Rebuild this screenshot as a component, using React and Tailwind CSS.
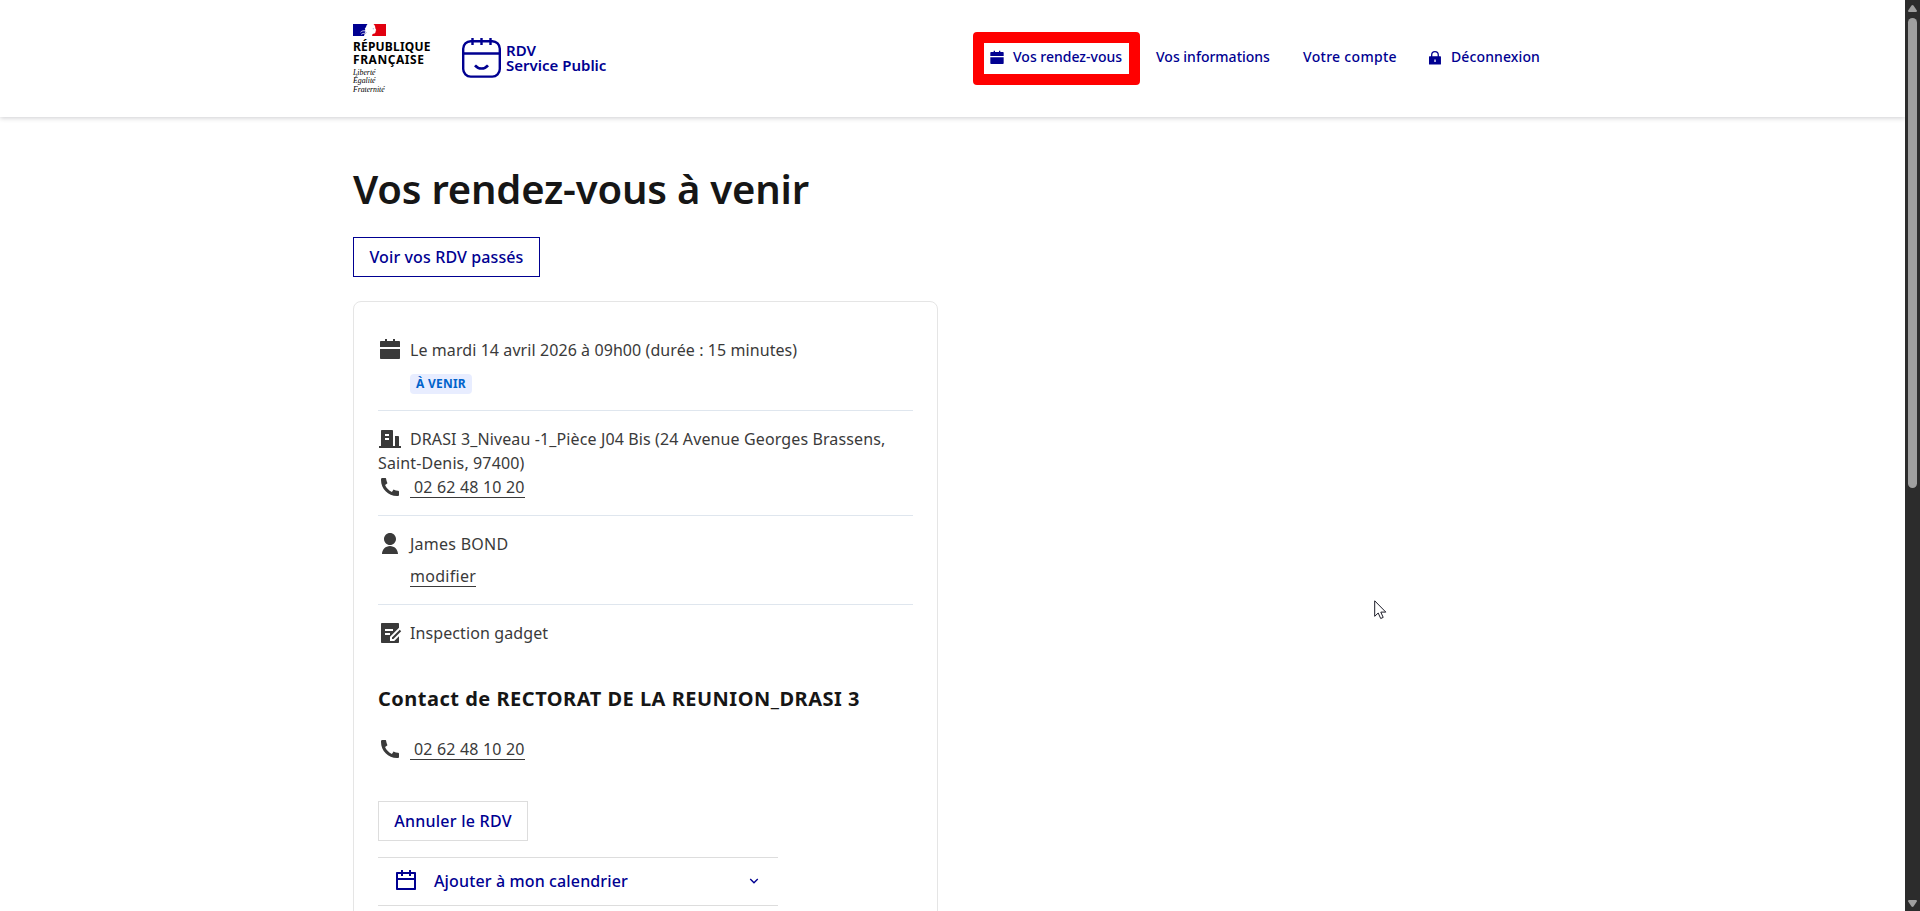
import React from 'react';
import {
  RiArrowDownSLine,
  RiBuildingFill,
  RiCalendarFill,
  RiCalendarLine,
  RiDraftFill,
  RiPhoneFill,
  RiUserFill,
} from 'react-icons/ri';

function MarianneFlag() {
  return (
    <svg width="33" height="12" viewBox="0 0 33 12">
      <rect width="33" height="12" fill="#fff" />
      <path d="M0 0h14.5c-.8.9-1.3 1.9-1.5 3l-1.2 1.8.6 1.2-.8 1 .8.6L11 12H0z" fill="#000091" />
      <path d="M20.5 0H33v12H19.2c-.2-1.3.2-2.1 1.2-2.3 1.5-.1 2.1-.5 2-1.4l.3-.9-.1-.7.7-.5-1-1.9c.1-1.8-.4-3.2-1.8-4.3z" fill="#e1000f" />
      <path d="M7.5 8.2c1.400-1.300 2.800-1.700 4.700-1.300M8.200 10.400c1.200-.9 2.600-1.300 4.300-1" fill="none" stroke="#fff" strokeWidth=".8" />
      <path d="M13.600 8.500c-.8.200-1.500.8-2 1.600M19.800 4.700l1.100.1" fill="none" stroke="#7a7ab8" strokeWidth=".7" />
    </svg>
  );
}

function RdvLogo() {
  return (
    <svg width="39" height="40" viewBox="0 0 39 40" fill="none" stroke="#000091" strokeWidth="2.4">
      <rect x="1.2" y="3.2" width="36.6" height="35.4" rx="7.5" />
      <path d="M1.2 15.5h36.6M10.500 0v7M19.500 0v7M28.500 0v7" />
      <path d="M13 27.300c3.500 4.200 9.500 4.200 13 0" strokeWidth="2.600" />
    </svg>
  );
}

function LockIcon() {
  return (
    <svg className="mt-0.5 mr-2 size-4" viewBox="0 0 16 16" fill="none">
      <path d="M4.700 7V5a3.300 3.300 0 0 1 6.600 0v2" stroke="currentColor" strokeWidth="1.300" />
      <path d="M2.600 6.300h10.800q.6 0 .6.6v7.100q0 .6-.6.6H2.600q-.6 0-.6-.6V6.900q0-.6.6-.6zM7.400 9.400v2.500h1.300V9.400z" fill="currentColor" fillRule="evenodd" />
    </svg>
  );
}

function Header() {
  return (
    <header className="h-[117px] bg-white shadow-[0_1px_5px_rgba(0,0,18,0.2)]">
      <div className="mx-auto flex w-[1199px] items-start pt-6">
        <div className="w-[109px]">
          <MarianneFlag />
          <div className="mt-1 text-xs leading-[13px] font-bold text-black">
            <div className="tracking-[0.18px]">RÉPUBLIQUE</div>
            <div className="tracking-[0.55px]">FRANÇAISE</div>
          </div>
          <div className="mt-[3px] font-['Liberation_Serif',serif] text-[7.8px] leading-[8.4px] text-black italic">
            <div>Liberté</div>
            <div>Égalité</div>
            <div className="tracking-[-0.05px]">Fraternité</div>
          </div>
        </div>
        <div className="flex items-start pt-[14px]">
          <RdvLogo />
          <div className="pt-[5px] pl-[5px] text-[15px] leading-[15px] font-semibold text-[#000091]">
            <div>RDV</div>
            <div>Service Public</div>
          </div>
        </div>
        <nav className="mt-2 mr-[-4px] ml-auto flex text-sm leading-6 font-medium text-[#000091]">
          <a className="relative flex h-[53px] w-[167px] items-center px-4 pb-[3px]">
            <RiCalendarFill className="mt-0.5 mr-2 size-4" />
            <span className="whitespace-nowrap">Vos rendez-vous</span>
            <span className="absolute inset-0 rounded-[4px] border-[11px] border-[#ff0000]" />
          </a>
          <a className="flex h-[53px] w-[147px] items-center px-4 pb-[3px]">Vos informations</a>
          <a className="flex h-[53px] w-[124px] items-center px-4 pb-[3px] tracking-[0.3px] whitespace-nowrap">Votre compte</a>
          <a className="flex h-[53px] w-[145px] items-center px-4 pb-[3px] tracking-[0.12px]">
            <LockIcon />
            Déconnexion
          </a>
        </nav>
      </div>
    </header>
  );
}

function PhoneLine() {
  return (
    <div className="flex h-6">
      <RiPhoneFill className="mr-2 size-6" />
      <a className="h-[23px] border-b border-[#3a3a3a] pl-[4px] tracking-[0.18px]">02 62 48 10 20</a>
    </div>
  );
}

function RdvCard() {
  return (
    <div className="mt-6 w-[585px] rounded-lg border border-[#e5e5e5] px-6 pt-6 text-[#3a3a3a]">
      <div className="border-b border-[#dfe6ee] pt-3 pb-4">
        <div className="flex tracking-[0.08px]">
          <RiCalendarFill className="mr-2 size-6" />
          Le mardi 14 avril 2026 à 09h00 (durée : 15 minutes)
        </div>
        <div className="mt-3 ml-8 flex h-5 w-[62px] items-center justify-center rounded bg-[#e8edff] text-xs leading-5 font-bold tracking-[0.24px] text-[#0063cb]">
          À VENIR
        </div>
      </div>
      <div className="border-b border-[#dfe6ee] py-4">
        <div className="tracking-[0.12px]">
          <RiBuildingFill className="mr-2 inline size-6 align-top" />
          DRASI 3_Niveau -1_Pièce J04 Bis (24 Avenue Georges Brassens, Saint-Denis, 97400)
        </div>
        <PhoneLine />
      </div>
      <div className="border-b border-[#dfe6ee] py-4">
        <div className="flex tracking-[0.25px]">
          <RiUserFill className="mr-2 size-6" />
          James BOND
        </div>
        <div className="mt-2 ml-8 flex h-6">
          <a className="h-[23px] border-b border-[#3a3a3a] tracking-[0.28px]">modifier</a>
        </div>
      </div>
      <div className="flex pt-4 tracking-[0.1px]">
        <RiDraftFill className="mr-2 size-6" />
        Inspection gadget
      </div>
      <h2 className="mt-10 mb-6 text-xl leading-7 font-bold tracking-[0.5px] whitespace-nowrap text-[#161616]">
        Contact de RECTORAT DE LA REUNION_DRASI 3
      </h2>
      <PhoneLine />
      <button className="mt-10 flex h-10 w-[150px] items-center justify-center border border-[#dddddd] font-medium tracking-[0.25px] text-[#000091]">
        Annuler le RDV
      </button>
      <button className="mt-4 flex h-[49px] w-[400px] items-center border-y border-[#dddddd] px-4 pb-0.5 font-medium tracking-[0.13px] text-[#000091]">
        <RiCalendarLine className="mr-4 size-6" />
        Ajouter à mon calendrier
        <RiArrowDownSLine className="ml-auto size-4" />
      </button>
      <div className="h-40" />
    </div>
  );
}

function Scrollbar() {
  return (
    <div className="flex w-[15px] flex-col items-center justify-between bg-[#2c2c2c] pt-[5px] pb-1">
      <div className="flex flex-col items-center gap-1.5">
        <svg width="9" height="7" viewBox="0 0 9 7">
          <path d="M4.500 0 5.500.6 9 5.800 8.500 7H.5L0 5.800 3.500.6z" fill="#9f9f9f" />
        </svg>
        <div className="h-[470px] w-[9px] rounded-full bg-[#9f9f9f]" />
      </div>
      <svg width="9" height="7" viewBox="0 0 9 7">
        <path d="M4.500 7 5.500 6.400 9 1.200 8.500 0H.5L0 1.200 3.500 6.400z" fill="#9f9f9f" />
      </svg>
    </div>
  );
}

function Cursor() {
  return (
    <svg className="absolute top-[600px] left-[1374px]" width="13" height="20" viewBox="0 0 13 20">
      <path
        d="M.7.8v15.500l3.500-3.300 2.500 5.500 2.500-1.100-2.400-5.300h5z"
        fill="#fff"
        stroke="#1c1c28"
        strokeWidth="1"
      />
    </svg>
  );
}

export default function App() {
  return (
    <div className="relative flex h-[911px] overflow-hidden bg-white font-['Noto_Sans',sans-serif] text-base leading-6">
      <div className="flex-1 overflow-hidden">
        <Header />
        <main className="mx-auto w-[1199px] pt-[47px]">
          <h1 className="text-[40px] leading-[50px] font-semibold tracking-[-0.2px] text-[#161616]">
            Vos rendez-vous à venir
          </h1>
          <button className="mt-[23px] flex h-10 w-[187px] items-center justify-center border border-[#000091] font-medium tracking-[0.11px] text-[#000091]">
            Voir vos RDV passés
          </button>
          <RdvCard />
        </main>
      </div>
      <Scrollbar />
      <Cursor />
    </div>
  );
}
